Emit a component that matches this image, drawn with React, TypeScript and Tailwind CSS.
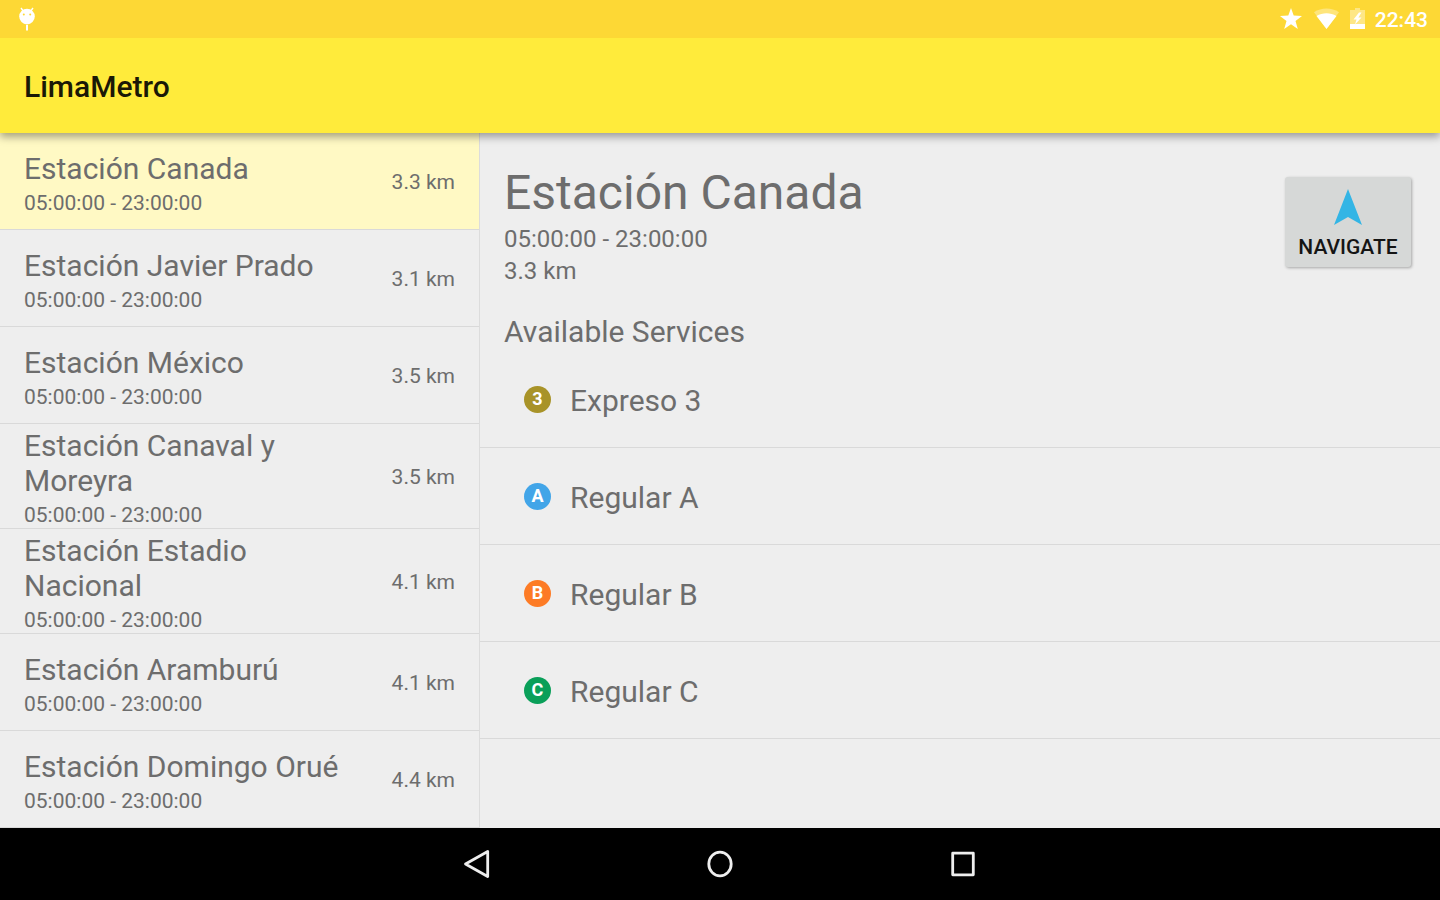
const HOURS = '05:00:00 - 23:00:00';

const stations = [
  { name: 'Estación Canada', distance: '3.3 km' },
  { name: 'Estación Javier Prado', distance: '3.1 km' },
  { name: 'Estación México', distance: '3.5 km' },
  { name: 'Estación Canaval y Moreyra', distance: '3.5 km' },
  { name: 'Estación Estadio Nacional', distance: '4.1 km' },
  { name: 'Estación Aramburú', distance: '4.1 km' },
  { name: 'Estación Domingo Orué', distance: '4.4 km' },
];

const services = [
  { badge: '3', name: 'Expreso 3', color: 'bg-[#a89328]' },
  { badge: 'A', name: 'Regular A', color: 'bg-[#42a5e8]' },
  { badge: 'B', name: 'Regular B', color: 'bg-[#fd7b25]' },
  { badge: 'C', name: 'Regular C', color: 'bg-[#0a9f59]' },
];

function StatusBar() {
  return (
    <div className="relative z-20 flex h-[38px] shrink-0 items-center justify-between bg-[#fdd835] pr-3 pl-[18px] text-white">
      <svg className="h-6 w-[18px]" viewBox="0 0 18 24" fill="none" stroke="currentColor" aria-hidden="true">
        <path d="M3 1l3 4M15 1l-3 4" strokeWidth="1.4" />
        <circle cx="9" cy="9.600" r="7.800" fill="currentColor" stroke="none" />
        <circle cx="5.800" cy="7.600" r="1" fill="#fdd835" stroke="none" />
        <circle cx="12.200" cy="7.600" r="1" fill="#fdd835" stroke="none" />
        <path d="M9 18v5.500" strokeWidth="2" />
      </svg>
      <div className="flex items-center">
        <svg className="h-[22px] w-[22px]" viewBox="0 0 22 22" fill="currentColor" aria-hidden="true">
          <path d="M11 0l2.7 7.6 8.3.3-6.5 5 2.3 8.1L11 16.3 4.2 21l2.3-8.1L0 7.9l8.3-.3z" />
        </svg>
        <svg className="ml-3 h-[22px] w-[25px]" viewBox="0 0 25 22" fill="currentColor" aria-hidden="true">
          <path d="M12.5 21L0 4.200C7.400-.800 17.600-.800 25 4.200z" opacity=".35" />
          <path d="M12.500 21L2.500 8C8.500 4.300 16.500 4.300 22.500 8z" />
        </svg>
        <svg className="mr-2.5 ml-[11px] h-[22px] w-[15px]" viewBox="0 0 15 22" aria-hidden="true">
          <path d="M5 0h5v2h5v19H0V2h5z" fill="currentColor" opacity=".4" />
          <path d="M0 16h15v5H0zM9 4.500L3.500 11.500h3L5 16.500l6.500-7H8.400L11.500 4.500z" fill="currentColor" />
        </svg>
        <span className="pt-0.5 text-[21px] leading-6 font-medium">22:43</span>
      </div>
    </div>
  );
}

function StationList() {
  return (
    <nav aria-label="Stations" className="w-1/3 shrink-0 overflow-hidden border-r border-[#dcdcdc]">
      <ul>
        {stations.map((station, i) => (
          <li key={station.name} className="border-b border-[#d9d9d9]">
            <button
              type="button"
              aria-current={i === 0}
              className={`flex min-h-24 w-full items-center justify-between px-6 text-left ${i === 0 ? 'bg-[#fff9c4]' : ''}`}
            >
              <span className="w-[328px] pt-1">
                <span className="block text-[30px] leading-[35px]">{station.name}</span>
                <span className="mt-1 block text-[21px] leading-[26px]">{HOURS}</span>
              </span>
              <span className="pt-0.5 text-[21px] leading-6 whitespace-nowrap">{station.distance}</span>
            </button>
          </li>
        ))}
      </ul>
    </nav>
  );
}

function StationDetail() {
  return (
    <main className="min-w-0 grow">
      <header className="flex items-start justify-between pt-[30px] pr-[29px] pl-6">
        <div>
          <h2 className="text-5xl leading-[60px]">Estación Canada</h2>
          <p className="text-2xl leading-8">{HOURS}</p>
          <p className="text-2xl leading-8">3.3 km</p>
        </div>
        <button
          type="button"
          className="mt-[14px] flex h-[90px] w-[126px] flex-col items-center rounded-[3px] bg-[#d6d8d7] pt-3 text-[21px] leading-6 font-medium text-[#141414] shadow-[1px_1px_3px_rgba(0,0,0,0.3)]"
        >
          <svg className="mb-2.5 h-9 w-7" viewBox="0 0 28 36" fill="#33b5e5" aria-hidden="true">
            <path d="M14 0l14 36-14-8-14 8z" />
          </svg>
          NAVIGATE
        </button>
      </header>
      <h3 className="px-6 pt-[26px] text-[30px] leading-[38px]">Available Services</h3>
      <ul>
        {services.map((service) => (
          <li key={service.name} className="border-b border-[#d9d9d9]">
            <a href="#service" className="flex h-24 items-center pt-1 pl-11">
              <span className={`mr-[19px] mb-1 flex size-[27px] items-center justify-center rounded-full text-lg leading-none font-bold text-white ${service.color}`}>
                {service.badge}
              </span>
              <span className="text-[30px] leading-9">{service.name}</span>
            </a>
          </li>
        ))}
      </ul>
    </main>
  );
}

function NavigationBar() {
  return (
    <div className="flex h-[72px] shrink-0 items-center justify-center gap-[123px] bg-black text-[#eeeeee]">
      <button type="button" aria-label="Back" className="flex w-[120px] justify-center">
        <svg className="size-9" viewBox="0 0 36 36" fill="none" stroke="currentColor" strokeWidth="2.800" strokeLinejoin="round">
          <path d="M28.700 5.500v25L6.500 18z" />
        </svg>
      </button>
      <button type="button" aria-label="Home" className="flex w-[120px] justify-center">
        <svg className="size-9" viewBox="0 0 36 36" fill="none" stroke="currentColor" strokeWidth="2.800">
          <ellipse cx="18" cy="18" rx="11.200" ry="11.800" />
        </svg>
      </button>
      <button type="button" aria-label="Recent apps" className="flex w-[120px] justify-center">
        <svg className="size-9" viewBox="0 0 36 36" fill="none" stroke="currentColor" strokeWidth="2.800" strokeLinejoin="round">
          <path d="M7.700 7.200h20.600v21.600H7.700z" />
        </svg>
      </button>
    </div>
  );
}

export default function App() {
  return (
    <div className="flex h-screen flex-col bg-[#eeeeee] font-[Roboto,sans-serif] text-[#6d6d6d]">
      <StatusBar />
      <header className="z-10 flex h-[95px] shrink-0 items-center bg-[#ffeb3b] px-6 pt-[3px] shadow-[0_4px_8px_rgba(0,0,0,0.35)]">
        <h1 className="text-[30px] leading-9 font-medium text-[#1a1806]">LimaMetro</h1>
      </header>
      <div className="flex min-h-0 grow">
        <StationList />
        <StationDetail />
      </div>
      <NavigationBar />
    </div>
  );
}
